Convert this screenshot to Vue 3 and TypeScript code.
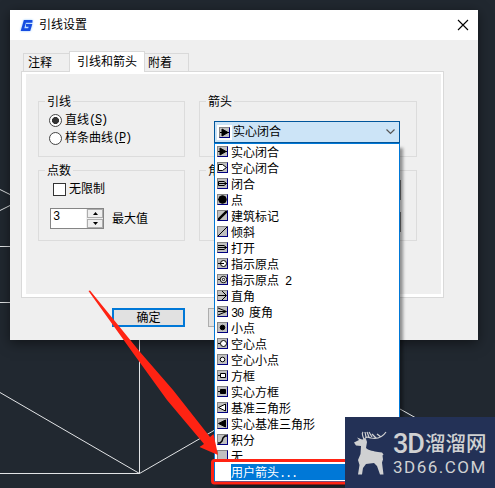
<script setup lang="ts">
interface ArrowStyle {
  label: string;
  icon: string;
  prefix?: string;
  suffix?: string;
}

const dot = (r: number) => `<circle cx="5.5" cy="5.5" r="${r}" fill="#000" />`;

const solidArrow = '<path d="M0 5.5h11" /><path d="M3 2v7l6-3.5z" fill="#000" />';

const arrowStyles: ArrowStyle[] = [
  { label: '实心闭合', icon: solidArrow },
  { label: '空心闭合', icon: '<path d="M1.5 2.5v6h4l4-3-4-3z" fill="#fff" />' },
  { label: '闭合', icon: '<path d="M1.500 3.500h5.500l2.500 2-2.500 2H1.500zM1 5.500h9" />' },
  { label: '点', icon: `<path d="M0 5.5h3" />${dot(3.8)}` },
  { label: '建筑标记', icon: '<path d="M1 10l9-9" stroke-width="2.4" />' },
  { label: '倾斜', icon: '<path d="M1 10l9-9" />' },
  { label: '打开', icon: '<path d="M0 3.500h7l2.500 2-2.500 2H0M0 5.500h10" />' },
  { label: '指示原点', icon: '<circle cx="6.500" cy="5.500" r="3" fill="#fff" /><path d="M0 5.500h7" />' },
  {
    label: '指示原点',
    suffix: ' 2',
    icon: '<path d="M0 5.500h3" /><circle cx="6.500" cy="5.500" r="3.200" fill="#fff" /><circle cx="6.500" cy="5.500" r="1.200" />',
  },
  { label: '直角', icon: '<path d="M0 5.500h9M5 1l4.500 4.500L5 10" />' },
  { label: '度角', prefix: '30 ', icon: '<path d="M0 5.500h9M1 2l8.500 3.500L1 9" />' },
  { label: '小点', icon: dot(2.3) },
  { label: '空心点', icon: '<path d="M0 5.500h3" /><circle cx="6.500" cy="5.500" r="3" fill="#fff" />' },
  { label: '空心小点', icon: '<circle cx="5.500" cy="5.500" r="2.300" fill="#fff" />' },
  { label: '方框', icon: '<path d="M0 5.500h3" /><path d="M3.500 3.500h5v4h-5z" fill="#fff" />' },
  { label: '实心方框', icon: '<path d="M0 5.500h3" /><path d="M3.500 3.500h5v4h-5z" fill="#000" />' },
  { label: '基准三角形', icon: '<path d="M8.500 2v7L1.500 5.500z" fill="#fff" />' },
  { label: '实心基准三角形', icon: '<path d="M8.500 2v7L1.500 5.500z" fill="#000" />' },
  { label: '积分', icon: '<path d="M1 9h2l2-2 1-3 2-2h2" stroke-width="1.400" />' },
  { label: '无', icon: '' },
];
</script>

<template>
  <main class="canvas">
    <svg class="drawing" viewBox="0 0 495 488">
      <path d="M0 189.500l10 5M0 210.500l10-5M0 246.500h10M0 302.500h10M0 392.500l139.500 81L400 323M0 473.500h139.500V340M400 409l16 9" />
    </svg>

    <section class="dialog">
      <header class="dialog__title">
        <svg class="dialog__logo" viewBox="0 0 12 12"><path d="M11.500 2.200H4.500L2.300 9.800h6.200l1.200-4H5.500" /></svg>
        <span>引线设置</span>
        <svg class="dialog__close" viewBox="0 0 12 12"><path d="M1 1l10 10M11 1L1 11" /></svg>
      </header>

      <nav class="tabs">
        <span class="tab tab--note">注释</span>
        <span class="tab tab--active">引线和箭头</span>
        <span class="tab tab--attach">附着</span>
      </nav>

      <div class="page">
        <div class="column column--left">
          <section class="group">
            <h2 class="group__title">引线</h2>
            <label class="option">
              <i class="radio radio--checked"></i>直线<span class="latin">(<u>S</u>)</span>
            </label>
            <label class="option">
              <i class="radio"></i>样条曲线<span class="latin">(<u>P</u>)</span>
            </label>
          </section>
          <section class="group group--points">
            <h2 class="group__title">点数</h2>
            <label class="option option--check"><i class="checkbox"></i>无限制</label>
            <div class="amount">
              <div class="spinner">
                <span class="spinner__value latin">3</span>
                <span class="spinner__buttons">
                  <i class="spinner__button"><svg viewBox="0 0 5 3"><path d="M0 3h5L2.500 0z" /></svg></i>
                  <i class="spinner__button"><svg viewBox="0 0 5 3"><path d="M0 0h5L2.500 3z" /></svg></i>
                </span>
              </div>
              <span>最大值</span>
            </div>
          </section>
        </div>
        <div class="column column--right">
          <section class="group">
            <h2 class="group__title">箭头</h2>
          </section>
          <section class="group group--points">
            <h2 class="group__title">角</h2>
            <div class="constraint"></div>
            <div class="constraint"></div>
          </section>
        </div>
      </div>

      <footer class="actions">
        <button class="button button--default">确定</button>
        <button class="button"></button>
      </footer>
    </section>

    <div class="combo">
      <div class="combo__field">
        <span class="combo__icon"><svg class="arrow-icon" viewBox="1 1 9 9" v-html="solidArrow" /></span>
        <span>实心闭合</span>
        <svg class="combo__chevron" viewBox="0 0 9 6"><path d="M.5.500l4 4 4-4" /></svg>
      </div>
      <ul class="combo__list">
        <li v-for="(style, index) in arrowStyles" :key="index" class="combo__item">
          <svg class="arrow-icon" viewBox="1 1 9 9" v-html="style.icon" />
          <span class="combo__label">
            <span v-if="style.prefix" class="latin">{{ style.prefix }}</span>{{ style.label
            }}<span v-if="style.suffix" class="latin">{{ style.suffix }}</span>
          </span>
        </li>
        <li class="combo__item combo__item--selected">
          <span class="combo__label">用户箭头<span class="latin">...</span></span>
        </li>
      </ul>
    </div>

    <svg class="annotation" viewBox="0 0 495 488">
      <path d="M88.500 291l1.500-.5L140 352l33 38 37 47 3.500-3L218 455l-18.500-8 4.500-3-37-44-34-47z" />
      <rect x="212.500" y="460.500" width="150" height="22.500" rx="2" />
    </svg>

    <aside class="brand">
      <svg class="brand__deer" viewBox="0 0 34 46">
        <path class="brand__body" d="M0 12.500L5 10 3 7.500l5 2 4-.5 1 3-1 6c3 3 8 3 12 4l4 .5 1.500 2-1 1 .5 4-1 3 1.500 12H26l-3-8.500-3-3-8 1-3 4-1 6.500H4L5.500 35 4 30l2.500-6L7 16l-5-.5z" />
        <path class="brand__antler" d="M10 10C9 5 7 4 9 2M10 10c2-4 4-3 7-2 5 1 11 0 15-6M12 7l-1-5M15 7l-2-5M18 7l-3-5M22 8l-4-4M27 7l-4-3" />
      </svg>
      <div class="brand__text">
        <span class="brand__name"><b class="brand__mark">3D</b>溜溜网</span>
        <span class="brand__url">3D66.COM</span>
      </div>
    </aside>
  </main>
</template>

<style>
body {
  margin: 0;
  overflow: hidden;
}
</style>

<style scoped>
.canvas {
  position: relative;
  box-sizing: border-box;
  width: 495px;
  height: 488px;
  padding: 10px;
  overflow: hidden;
  background: #212830;
  color: #000;
  font: 12px/16px "Liberation Sans", "Noto Sans CJK SC", sans-serif;
}

.canvas * {
  box-sizing: border-box;
}

.latin {
  font-family: "Liberation Mono", monospace;
  letter-spacing: -1.2px;
  white-space: pre;
}

.drawing,
.annotation {
  position: absolute;
  inset: 0;
  width: 495px;
  height: 488px;
}

.drawing path {
  fill: none;
  stroke: #e2e4e6;
}

.dialog {
  position: relative;
  width: 468px;
  height: 330px;
  background: #efefef;
  box-shadow: 0 3px 12px rgba(0, 0, 0, 0.5);
}

.dialog__title {
  display: flex;
  align-items: center;
  height: 30px;
  padding: 0 9px 0 10px;
  background: #fff;
}

.dialog__logo {
  width: 13px;
  height: 13px;
  margin-right: 6px;
  fill: none;
  stroke: #164ce0;
  stroke-width: 2.5;
  filter: drop-shadow(0 0 1px #8cc4ff);
}

.dialog__close {
  width: 12px;
  height: 12px;
  margin-left: auto;
  fill: none;
  stroke: #000;
  stroke-width: 1.1;
}

.tabs {
  display: flex;
  align-items: flex-end;
  height: 31px;
  padding-left: 13px;
}

.tab {
  height: 18px;
  padding: 1px 0 0 4px;
  border: 1px solid #d9d9d9;
  border-bottom: 0;
}

.tab--note {
  width: 46px;
  border-right: 0;
}

.tab--active {
  z-index: 1;
  width: 76px;
  height: 21px;
  margin-bottom: -1px;
  padding: 2px 0 0 7px;
  background: #fff;
}

.tab--attach {
  width: 44px;
  padding-left: 3px;
  border-left: 0;
}

.page {
  display: flex;
  gap: 14px;
  width: 423px;
  height: 227px;
  margin-left: 11px;
  padding: 29px 0 0 16px;
  border: 1px solid #d9d9d9;
  box-shadow: inset 4px 2px #fff, inset -2px -3px #fff;
}

.column--left {
  width: 147px;
}

.column--right {
  width: 218px;
}

.group {
  height: 56px;
  border: 1px solid #dcdcdc;
}

.group--points {
  height: 71px;
  margin-top: 13px;
}

.group__title {
  width: fit-content;
  height: 16px;
  margin: -8px 0 1px 6px;
  padding: 0 2px;
  background: #efefef;
  font: inherit;
}

.option {
  display: flex;
  align-items: center;
  height: 18px;
  padding-left: 10px;
}

.option--check {
  padding-left: 14px;
}

.radio {
  width: 13px;
  height: 13px;
  margin-right: 3px;
  border: 1px solid #444;
  border-radius: 50%;
  background: #fff;
}

.radio--checked {
  background: radial-gradient(circle, #333 0 3.2px, #fff 3.8px);
}

.checkbox {
  width: 13px;
  height: 13px;
  margin-right: 3px;
  border: 1px solid #333;
  background: #fff;
}

.amount {
  display: flex;
  align-items: center;
  gap: 8px;
  margin: 10px 0 0 11px;
}

.spinner {
  display: flex;
  width: 54px;
  height: 21px;
  border: 1px solid #858585;
  background: #fff;
}

.spinner__value {
  flex: 1;
  padding-left: 2px;
}

.spinner__buttons {
  display: flex;
  flex-direction: column;
  gap: 1px;
  width: 17px;
  padding-left: 1px;
  background: #efefef;
}

.spinner__button {
  display: flex;
  flex: 1;
  align-items: center;
  justify-content: center;
  border: 1px solid #adadad;
}

.spinner__button svg {
  width: 5px;
  height: 3px;
}

.constraint {
  width: 186px;
  height: 20px;
  margin: 0 0 12px 15px;
  border: 1px solid #777;
}

.actions {
  display: flex;
  gap: 23px;
  padding: 10px 0 0 102px;
}

.button {
  width: 73px;
  height: 19px;
  padding: 0;
  border: 1px solid #adadad;
  background: #e1e1e1;
  color: #000;
  font: inherit;
}

.button--default {
  border: 2px solid #0078d7;
}

.combo {
  position: absolute;
  top: 121px;
  left: 214px;
  width: 186px;
}

.combo__field {
  display: flex;
  align-items: center;
  height: 22px;
  padding: 0 4px 0 2px;
  border: 1px solid #00559b;
  background: #cce4f7;
}

.combo__icon {
  display: flex;
  margin-right: 1px;
  padding: 2px;
  background: #fff;
}

.combo__chevron {
  width: 9px;
  height: 6px;
  margin-left: auto;
  fill: none;
  stroke: #555;
  stroke-width: 1.2;
}

.combo__list {
  height: 339px;
  margin: 0;
  padding: 0;
  border: 1px solid #0078d7;
  background: #fff;
  box-shadow: 3px 5px 3px rgba(0, 0, 0, 0.4);
  list-style: none;
}

.combo__item {
  display: flex;
  align-items: flex-start;
  gap: 3px;
  height: 16px;
  padding-left: 2px;
}

.combo__item .arrow-icon {
  margin-top: 2px;
}

.combo__label {
  margin-top: 1px;
  line-height: 16px;
}

.combo__item--selected {
  padding-left: 16px;
  background: linear-gradient(90deg, #fff 16px, #0078d7 16px);
  color: #fff;
}

.arrow-icon {
  flex-shrink: 0;
  width: 11px;
  height: 11px;
  border: 1px solid #858585;
  border-right-color: #000080;
  border-bottom-color: #000080;
  background: #c0c0c0;
  fill: none;
  stroke: #000;
}

.annotation path {
  fill: #ff2313;
}

.annotation rect {
  fill: none;
  stroke: #ff2313;
  stroke-width: 3;
}

.brand {
  position: absolute;
  top: 417px;
  left: 345px;
  display: flex;
  width: 150px;
  height: 71px;
  padding: 13px 0 0 9px;
  background: #233156;
  color: #d0d1d2;
}

.brand__deer {
  width: 34px;
  height: 46px;
}

.brand__body {
  fill: #d0d1d2;
}

.brand__antler {
  fill: none;
  stroke: #d0d1d2;
  stroke-width: 1.2;
}

.brand__text {
  display: flex;
  flex-direction: column;
  padding-left: 5px;
  white-space: nowrap;
}

.brand__name {
  height: 28px;
  font-size: 20.5px;
  font-weight: 500;
  line-height: 28px;
}

.brand__mark {
  margin-right: 1px;
  font-family: Roboto, "Liberation Sans", sans-serif;
  font-size: 27px;
  font-weight: 500;
  letter-spacing: -1px;
  vertical-align: -2px;
  line-height: 20px;
}

.brand__url {
  font-family: Roboto, "Liberation Sans", sans-serif;
  font-size: 17px;
  letter-spacing: 1.5px;
  line-height: 18px;
}
</style>
